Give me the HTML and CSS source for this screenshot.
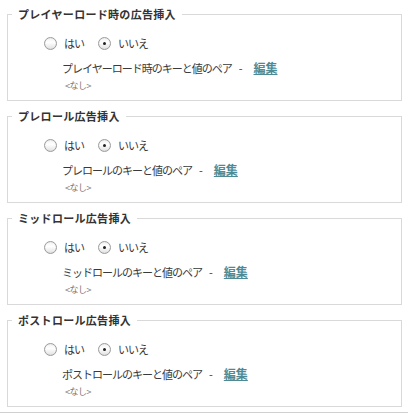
FILE: index.html
```html
<!DOCTYPE html>
<html lang="ja">
<head>
    <meta charset="UTF-8">
    <title>広告挿入設定</title>
    <link rel="stylesheet" href="styles.css">
</head>
<body>
    <div class="settings">
        <fieldset class="ad-group">
            <legend>プレイヤーロード時の広告挿入</legend>
            <div class="choices">
                <label class="choice"><span class="radio"></span>はい</label>
                <label class="choice"><span class="radio checked"></span>いいえ</label>
            </div>
            <div class="pair">プレイヤーロード時のキーと値のペア<span class="dash">-</span><a class="edit" href="#">編集</a></div>
            <div class="none">&lt;なし&gt;</div>
        </fieldset>

        <fieldset class="ad-group">
            <legend>プレロール広告挿入</legend>
            <div class="choices">
                <label class="choice"><span class="radio"></span>はい</label>
                <label class="choice"><span class="radio checked"></span>いいえ</label>
            </div>
            <div class="pair">プレロールのキーと値のペア<span class="dash">-</span><a class="edit" href="#">編集</a></div>
            <div class="none">&lt;なし&gt;</div>
        </fieldset>

        <fieldset class="ad-group">
            <legend>ミッドロール広告挿入</legend>
            <div class="choices">
                <label class="choice"><span class="radio"></span>はい</label>
                <label class="choice"><span class="radio checked"></span>いいえ</label>
            </div>
            <div class="pair">ミッドロールのキーと値のペア<span class="dash">-</span><a class="edit" href="#">編集</a></div>
            <div class="none">&lt;なし&gt;</div>
        </fieldset>

        <fieldset class="ad-group">
            <legend>ポストロール広告挿入</legend>
            <div class="choices">
                <label class="choice"><span class="radio"></span>はい</label>
                <label class="choice"><span class="radio checked"></span>いいえ</label>
            </div>
            <div class="pair">ポストロールのキーと値のペア<span class="dash">-</span><a class="edit" href="#">編集</a></div>
            <div class="none">&lt;なし&gt;</div>
        </fieldset>
    </div>
    <div class="footer-line"></div>
</body>
</html>
```

FILE: styles.css
```css
body {
    margin: 0;
    background: #ffffff;
    font-family: "Noto Sans CJK JP", "Liberation Sans", sans-serif;
    color: #3a3a3a;
    font-size: 11px;
}
.settings {
    padding: 6px 6px 0 7px;
}
.ad-group {
    margin: 0 0 7px 0;
    padding: 0 0 8px 0;
    border: 1px solid #d9d9d9;
    min-width: 0;
}
.ad-group legend {
    margin-left: 4px;
    padding: 0 6px;
    line-height: 16px;
    font-size: 11px;
    font-weight: bold;
    letter-spacing: 0.3px;
    color: #333;
}
.choices {
    display: flex;
    align-items: center;
    height: 16px;
    margin-top: 13px;
    padding-left: 36px;
}
.choice {
    display: flex;
    align-items: center;
    gap: 7px;
    letter-spacing: -1px;
    margin-right: 14px;
}
.radio {
    position: relative;
    width: 11px;
    height: 11px;
    border: 1px solid #9c9c9c;
    border-radius: 50%;
    background: linear-gradient(#f2f2f2, #ffffff 40%, #e2e2e2);
    box-shadow: inset 0 0 1px rgba(0,0,0,0.15);
}
.radio.checked::after {
    content: "";
    position: absolute;
    left: 4px;
    top: 4px;
    width: 3px;
    height: 3px;
    border-radius: 50%;
    background: #222;
}
.pair {
    margin-top: 9px;
    padding-left: 54px;
    line-height: 16px;
    letter-spacing: -1px;
    word-spacing: 0;
    white-space: nowrap;
}
.dash {
    margin: 0 12px 0 7px;
}
.edit {
    color: #4e8a93;
    font-size: 12px;
    font-weight: bold;
    letter-spacing: 0;
    text-decoration: underline;
}
.none {
    margin-top: 3px;
    padding-left: 57px;
    line-height: 13px;
    font-size: 9px;
    letter-spacing: -0.5px;
    color: #777;
}
.footer-line {
    margin-top: -2px;
    border-top: 1px solid #d0d0d0;
}
```
